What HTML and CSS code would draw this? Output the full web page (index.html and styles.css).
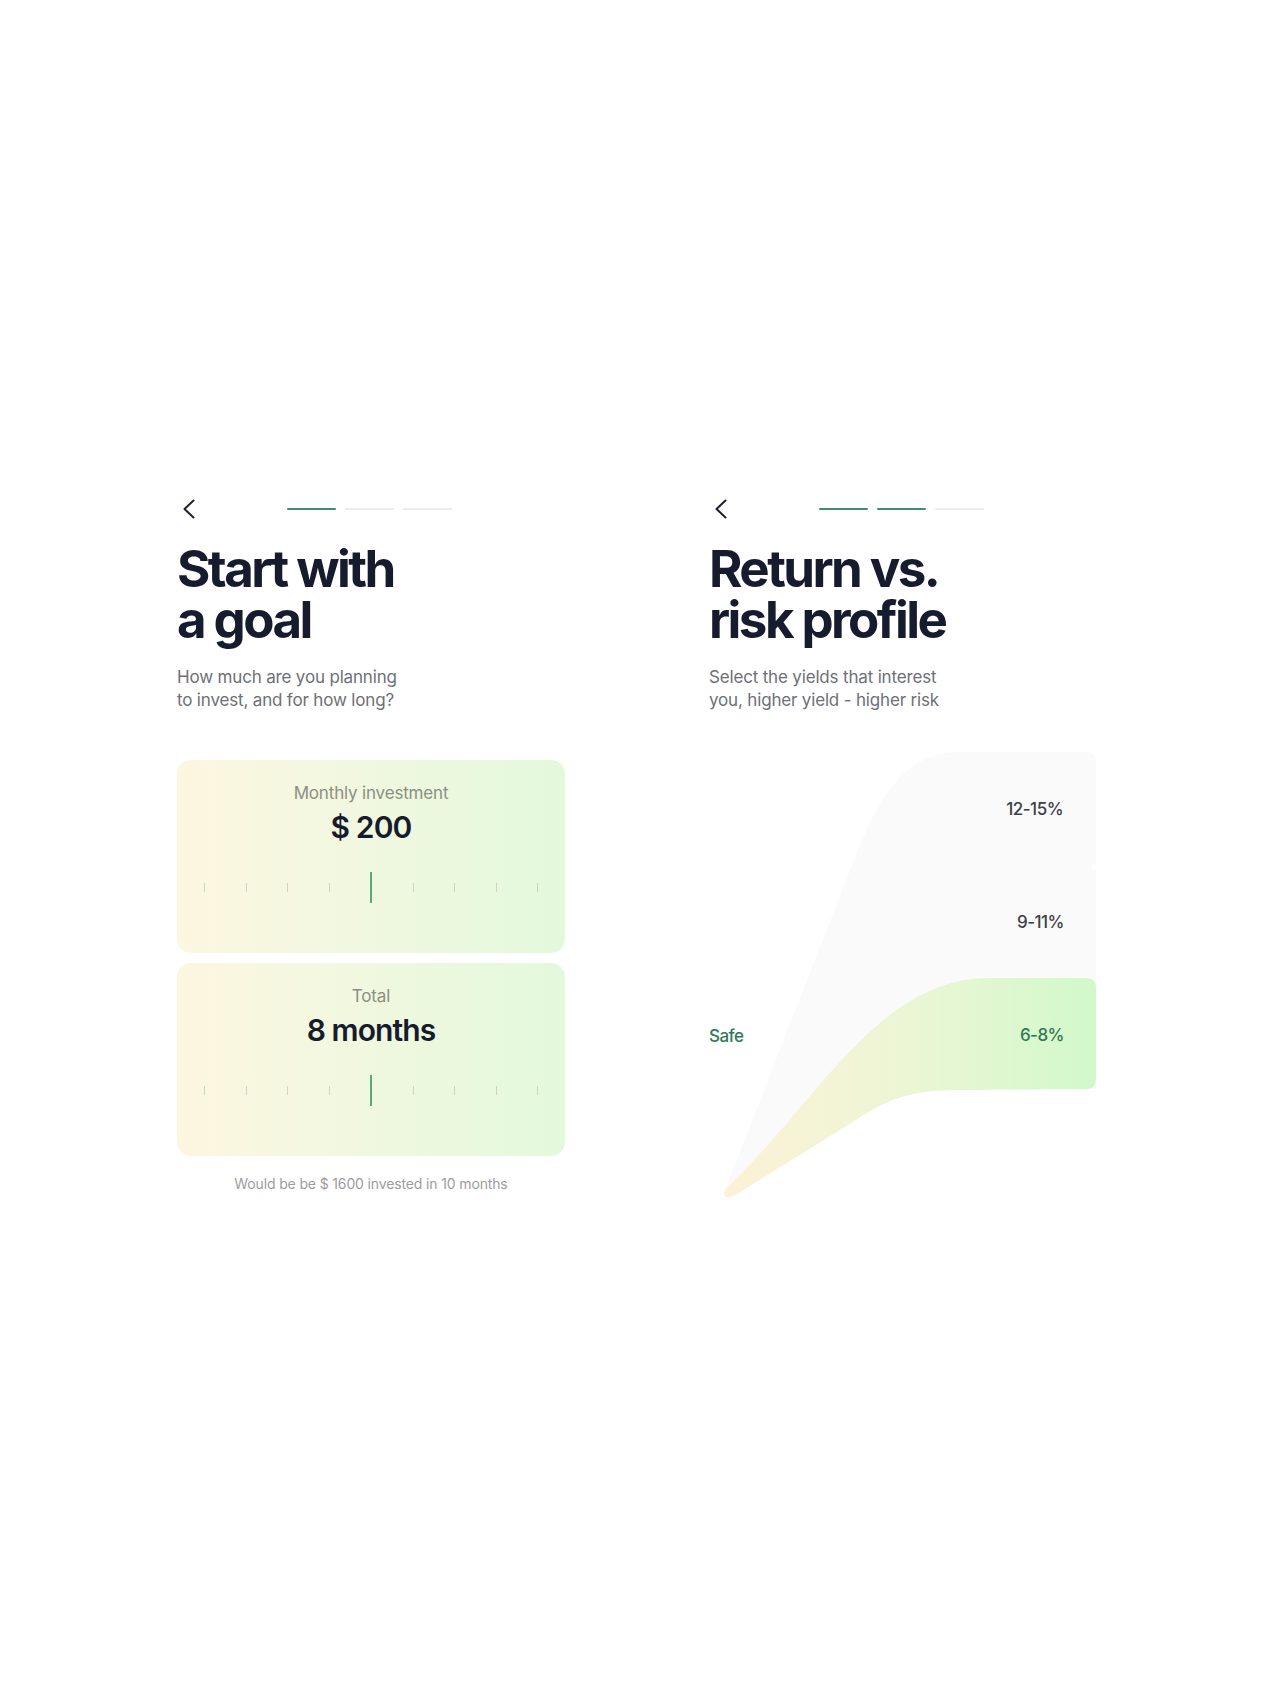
FILE: index.html
```html
<!DOCTYPE html>
<html>
<head>
	<meta charset="utf-8">
	<title>Invest onboarding</title>
	<link rel="stylesheet" href="styles.css">
</head>
<body>
	<div class="screens">

		<!-- step 1: goal -->
		<div class="screen">
			<div class="topbar">
				<svg class="back" width="14" height="20" viewBox="0 0 14 20"><path d="M11.5 1.5 L2.5 10 L11.5 18.5" /></svg>
				<div class="steps">
					<span class="step on"></span>
					<span class="step"></span>
					<span class="step"></span>
				</div>
			</div>
			<h1 class="title">Start with<br>a goal</h1>
			<p class="sub">How much are you planning<br>to invest, and for how long?</p>

			<div class="card">
				<div class="card-label">Monthly investment</div>
				<div class="card-value">$ 200</div>
				<div class="ruler">
					<i></i><i></i><i></i><i></i><i class="cur"></i><i></i><i></i><i></i><i></i>
				</div>
			</div>
			<div class="card">
				<div class="card-label">Total</div>
				<div class="card-value">8 months</div>
				<div class="ruler">
					<i></i><i></i><i></i><i></i><i class="cur"></i><i></i><i></i><i></i><i></i>
				</div>
			</div>
			<p class="note">Would be be $ 1600 invested in 10 months</p>
		</div>

		<!-- step 2: risk -->
		<div class="screen">
			<div class="topbar">
				<svg class="back" width="14" height="20" viewBox="0 0 14 20"><path d="M11.5 1.5 L2.5 10 L11.5 18.5" /></svg>
				<div class="steps">
					<span class="step on"></span>
					<span class="step on"></span>
					<span class="step"></span>
				</div>
			</div>
			<h1 class="title">Return vs.<br>risk profile</h1>
			<p class="sub">Select the yields that interest<br>you, higher yield - higher risk</p>

			<svg class="chart" width="388" height="470" viewBox="0 0 388 470">
				<defs>
					<linearGradient id="safeFill" gradientUnits="userSpaceOnUse" x1="16" y1="0" x2="387" y2="0">
						<stop offset="0" stop-color="#fdf1d6" />
						<stop offset="0.5" stop-color="#ebf6d5" />
						<stop offset="1" stop-color="#d1f8ca" />
					</linearGradient>
				</defs>
				<!-- risky bands -->
				<path class="band" d="M16 450 L145 120 C165 70 190 12 250 12 L377 12 Q387 12 387 22 L387 349 L250 350 C205 350 180 358 150 378 L26 455 Z" />
				<path class="gap" d="M383 124 L388 124 L388 130 L383 130 Z" />
				<!-- safe band -->
				<path fill="url(#safeFill)" d="M16 450 C110 360 170 238 280 238 L377 238 Q387 238 387 248 L387 339 Q387 349 377 349 L250 350 C205 350 180 358 150 378 L28 454 Q12 462 16 450 Z" />

				<text class="pct" x="354" y="75" text-anchor="end">12-15%</text>
				<text class="pct" x="355" y="188" text-anchor="end">9-11%</text>
				<text class="pct safe" x="355" y="301" text-anchor="end">6-8%</text>
				<text class="pct safe" x="0" y="302">Safe</text>
			</svg>
		</div>

	</div>
</body>
</html>
```

FILE: styles.css
```css
*
{
	margin: 0;
	padding: 0;
	box-sizing: border-box;
}
body
{
	background: #fff;
	font-family: Inter, "Liberation Sans", sans-serif;
	color: #161c2d;
}
.screens
{
	display: flex;
	gap: 144px;
	padding: 499px 0 0 177px;
}
.screen
{
	width: 388px;
}

/* back arrow + progress */
.topbar
{
	display: flex;
	align-items: center;
	height: 20px;
}
.back
{
	margin-left: 5px;
	fill: none;
	stroke: #1d2130;
	stroke-width: 2;
	stroke-linecap: round;
	stroke-linejoin: round;
}
.steps
{
	display: flex;
	gap: 9px;
	margin-left: 91px;
}
.step
{
	width: 49px;
	height: 2px;
	border-radius: 1px;
	background: #ebebec;
}
.step.on
{
	background: #3f8e6a;
}

.title
{
	margin-top: 24px;
	font-size: 51px;
	line-height: 51px;
	font-weight: 700;
	letter-spacing: -0.05em;
	color: #161c2d;
}
.sub
{
	margin-top: 21px;
	font-size: 17px;
	line-height: 23px;
	color: #6d7076;
	letter-spacing: -0.01em;
}

/* slider cards */
.card
{
	height: 193px;
	margin-top: 48px;
	padding-top: 22px;
	border-radius: 14px;
	background: linear-gradient(90deg, #fdf6e1 0%, #f1f8df 45%, #e3f9db 100%);
	text-align: center;
}
.card + .card
{
	margin-top: 10px;
}
.card-label
{
	font-size: 17px;
	line-height: 22px;
	color: #8a9083;
	letter-spacing: -0.01em;
}
.card-value
{
	margin-top: 5px;
	font-size: 30px;
	line-height: 36px;
	font-weight: 600;
	letter-spacing: -0.03em;
	color: #161c2d;
}
.ruler
{
	display: flex;
	justify-content: space-between;
	align-items: center;
	width: 334px;
	height: 31px;
	margin: 27px auto 0;
}
.ruler i
{
	width: 1px;
	height: 9px;
	background: #cdd4c4;
}
.ruler i.cur
{
	width: 2px;
	height: 31px;
	background: #58ab7b;
}
.note
{
	margin-top: 19px;
	font-size: 14px;
	line-height: 18px;
	text-align: center;
	color: #9d9d9d;
	letter-spacing: -0.01em;
}

/* yield chart */
.chart
{
	display: block;
	margin-top: 28px;
	overflow: visible;
}
.chart .band
{
	fill: #fafafb;
}
.chart .gap
{
	fill: #fff;
}
.pct
{
	font-family: Inter, "Liberation Sans", sans-serif;
	font-size: 17px;
	font-weight: 500;
	letter-spacing: -0.03em;
	fill: #3c4047;
}
.pct.safe
{
	fill: #2f7a56;
}
```
